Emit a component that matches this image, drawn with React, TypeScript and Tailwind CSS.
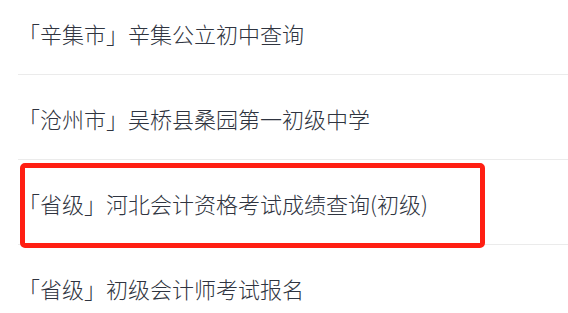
const items = [
  "「辛集市」辛集公立初中查询",
  "「沧州市」吴桥县桑园第一初级中学",
  "「省级」河北会计资格考试成绩查询(初级)",
  "「省级」初级会计师考试报名",
];

// 列表项，第三项带红色标注框
const App = () => {
  return (
    <div
      className="w-[568px] h-[313px] overflow-hidden bg-white"
      style={{ fontFamily: '"Noto Sans CJK SC", "Noto Sans", sans-serif' }}
    >
      <ul className="-mt-[10px]">
        {items.map((text, i) => (
          <li
            key={i}
            className="relative ml-[18px] h-[85px] border-b border-[#ebebeb] flex items-center text-[22px] font-light text-[#2f3440]"
          >
            <span className="pt-[2px]">{text}</span>
            {i === 2 && (
              <div className="absolute left-[2px] top-[3px] w-[465px] h-[85px] rounded-[5px] border-[5px] border-[#ff1f13]" />
            )}
          </li>
        ))}
      </ul>
    </div>
  );
};

export default App;
